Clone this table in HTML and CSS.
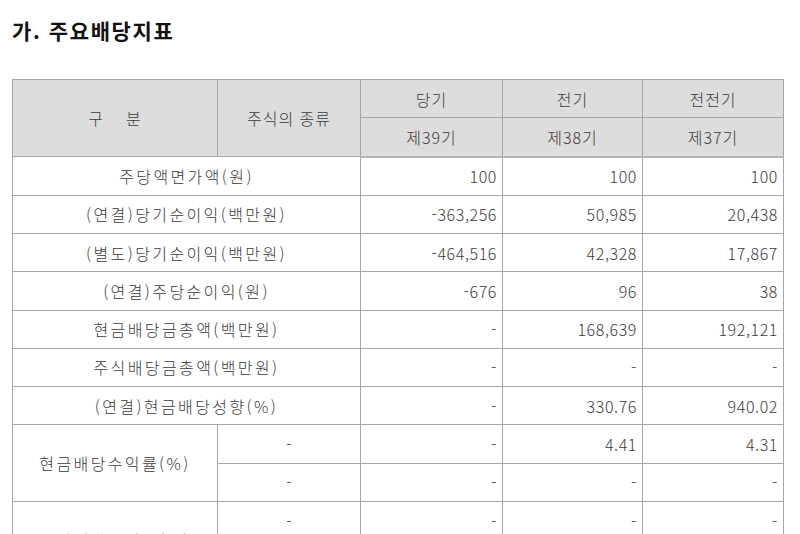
FILE: index.html
```html
<!DOCTYPE html>
<html lang="ko">
<head>
<meta charset="utf-8">
<title>주요배당지표</title>
<link rel="stylesheet" href="styles.css">
</head>
<body>
<h2 class="title">가. 주요배당지표</h2>
<table class="div-table">
  <colgroup>
    <col class="c1"><col class="c2"><col class="c3"><col class="c4"><col class="c5">
  </colgroup>
  <thead>
    <tr>
      <th rowspan="2" class="spaced">구&nbsp;&nbsp;&nbsp;&nbsp;분</th>
      <th rowspan="2">주식의 종류</th>
      <th>당기</th>
      <th>전기</th>
      <th>전전기</th>
    </tr>
    <tr class="sub">
      <th>제39기</th>
      <th>제38기</th>
      <th>제37기</th>
    </tr>
  </thead>
  <tbody>
    <tr><td colspan="2" class="label">주당액면가액(원)</td><td class="num">100</td><td class="num">100</td><td class="num">100</td></tr>
    <tr><td colspan="2" class="label">(연결)당기순이익(백만원)</td><td class="num">-363,256</td><td class="num">50,985</td><td class="num">20,438</td></tr>
    <tr><td colspan="2" class="label">(별도)당기순이익(백만원)</td><td class="num">-464,516</td><td class="num">42,328</td><td class="num">17,867</td></tr>
    <tr><td colspan="2" class="label">(연결)주당순이익(원)</td><td class="num">-676</td><td class="num">96</td><td class="num">38</td></tr>
    <tr><td colspan="2" class="label">현금배당금총액(백만원)</td><td class="num">-</td><td class="num">168,639</td><td class="num">192,121</td></tr>
    <tr><td colspan="2" class="label">주식배당금총액(백만원)</td><td class="num">-</td><td class="num">-</td><td class="num">-</td></tr>
    <tr><td colspan="2" class="label">(연결)현금배당성향(%)</td><td class="num">-</td><td class="num">330.76</td><td class="num">940.02</td></tr>
    <tr><td rowspan="2" class="label">현금배당수익률(%)</td><td class="center">-</td><td class="num">-</td><td class="num">4.41</td><td class="num">4.31</td></tr>
    <tr><td class="center">-</td><td class="num">-</td><td class="num">-</td><td class="num">-</td></tr>
    <tr><td rowspan="2" class="label">주식배당수익률(%)</td><td class="center">-</td><td class="num">-</td><td class="num">-</td><td class="num">-</td></tr>
    <tr><td class="center">-</td><td class="num">-</td><td class="num">-</td><td class="num">-</td></tr>
  </tbody>
</table>
</body>
</html>
```

FILE: styles.css
```css
html, body {
  margin: 0;
  padding: 0;
  background: #ffffff;
  overflow: hidden;
}

body {
  padding: 0 17px 0 12px;
  font-family: "Noto Sans CJK KR", "Noto Sans", sans-serif;
  color: #3a3a3a;
}

.title {
  margin: 15px 0 0 0;
  height: 64px;
  font-size: 21px;
  line-height: 30px;
  font-weight: bold;
  color: #111111;
  letter-spacing: 1.6px;
}

.div-table {
  border-collapse: collapse;
  width: 771px;
  table-layout: fixed;
  border: 1px solid #555555;
  font-size: 16px;
  font-weight: 300;
}

.c1 { width: 205px; }
.c2 { width: 143px; }
.c3 { width: 142px; }
.c4 { width: 140px; }
.c5 { width: 141px; }

.div-table th,
.div-table td {
  border: 1px solid #a6a6a6;
  height: 37.27px;
  padding: 0 5px;
  line-height: 20px;
  font-weight: 300;
  white-space: nowrap;
}

.div-table th {
  background: #dddddd;
  text-align: center;
  letter-spacing: 1px;
}

.div-table .sub th {
  border-bottom: 2px solid #b3b3b3;
}

.div-table .label {
  text-align: center;
  letter-spacing: 2.4px;
}

.div-table .center {
  text-align: center;
}

.div-table .num {
  text-align: right;
  letter-spacing: 0.6px;
}
```
